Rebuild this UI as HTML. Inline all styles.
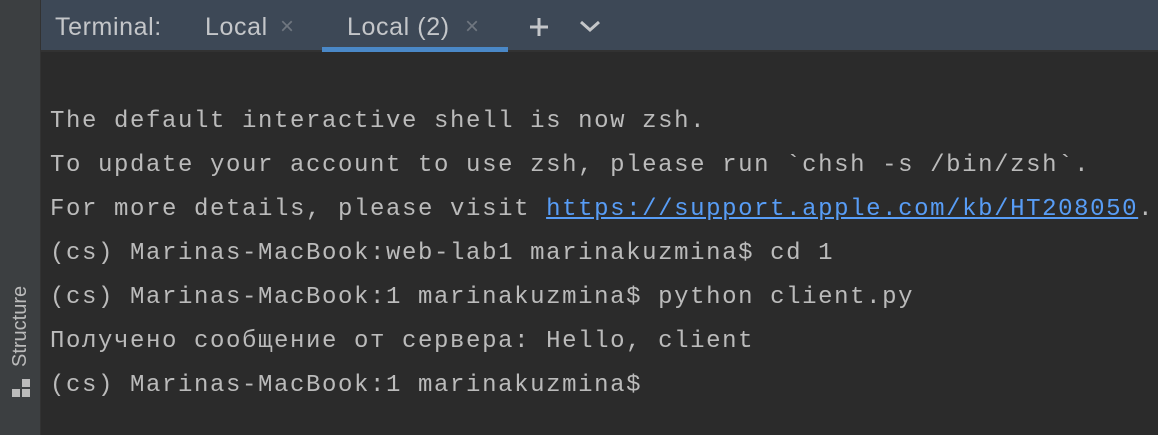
<!DOCTYPE html>
<html><head><meta charset="utf-8"><style>
html,body{margin:0;padding:0;width:1158px;height:435px;overflow:hidden;background:#2b2b2b;}
.side{position:absolute;left:0;top:0;width:40px;height:435px;background:#3c3f41;border-right:1px solid #323232;}
.side .lbl{position:absolute;left:9px;top:367px;transform:rotate(-90deg);transform-origin:0 0;font:20px "Liberation Sans",sans-serif;color:#bbb;white-space:nowrap;}
.hdr{position:absolute;left:41px;top:0;right:0;height:50px;background:#3d4856;border-bottom:2px solid #323232;}
.hdr span{position:absolute;top:13px;font:25px "Liberation Sans",sans-serif;letter-spacing:0.6px;color:#c4c6c9;}
.x{color:#707780 !important;font-size:24px !important;}
.ul{position:absolute;left:281px;top:47px;width:186px;height:5px;background:#4a88c7;}
.term{position:absolute;left:50px;top:100px;font:24px "Liberation Mono",monospace;letter-spacing:1.6px;color:#bbbbbb;line-height:44px;white-space:pre;}
a{color:#589df6;text-decoration:underline;}
</style></head><body>
<div class="side">
<div class="lbl">Structure</div>
<div style="position:absolute;left:12px;top:389px;width:8px;height:8px;background:#bbb"></div>
<div style="position:absolute;left:22px;top:389px;width:8px;height:8px;background:#bbb"></div>
<div style="position:absolute;left:22px;top:379px;width:8px;height:8px;background:#bbb"></div>
</div>
<div class="hdr">
<span style="left:14px">Terminal:</span>
<span style="left:164px">Local</span>
<span class="x" style="left:239px">×</span>
<span style="left:306px">Local (2)</span>
<span class="x" style="left:424px">×</span>
<svg style="position:absolute;left:486px;top:15px" width="24" height="24"><path d="M12 3V21M3 12H21" stroke="#c4c6c9" stroke-width="3"/></svg>
<svg style="position:absolute;left:537px;top:16px" width="26" height="20"><path d="M3 6L12 14L21 6" stroke="#c4c6c9" stroke-width="3" fill="none"/></svg>
<div class="ul"></div>
</div>
<div class="term">The default interactive shell is now zsh.
To update your account to use zsh, please run `chsh -s /bin/zsh`.
For more details, please visit <a>https://support.apple.com/kb/HT208050</a>.
(cs) Marinas-MacBook:web-lab1 marinakuzmina$ cd 1
(cs) Marinas-MacBook:1 marinakuzmina$ python client.py
Получено сообщение от сервера: Hello, client
(cs) Marinas-MacBook:1 marinakuzmina$</div>
</body></html>
